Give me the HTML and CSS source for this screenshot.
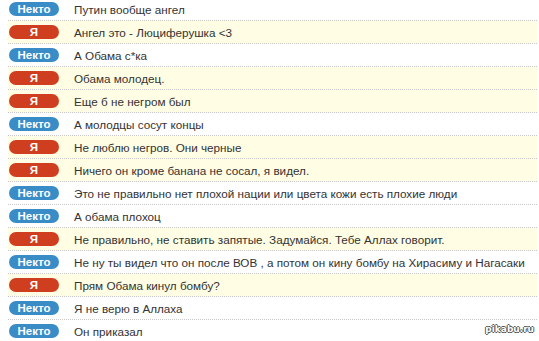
FILE: index.html
```html
<!doctype html>
<html>
<head>
  <meta charset="utf-8"/>
  <title>Чат</title>
  <link rel="stylesheet" href="styles.css">
</head>
<body>
  <div class="log">
    <div class="row"><span class="who them">Некто</span><span class="msg">Путин вообще ангел</span></div>
    <div class="row mine"><span class="who me">Я</span><span class="msg">Ангел это - Люциферушка &lt;3</span></div>
    <div class="row"><span class="who them">Некто</span><span class="msg">А Обама с*ка</span></div>
    <div class="row mine"><span class="who me">Я</span><span class="msg">Обама молодец.</span></div>
    <div class="row mine"><span class="who me">Я</span><span class="msg">Еще б не негром был</span></div>
    <div class="row"><span class="who them">Некто</span><span class="msg">А молодцы сосут концы</span></div>
    <div class="row mine"><span class="who me">Я</span><span class="msg">Не люблю негров. Они черные</span></div>
    <div class="row mine"><span class="who me">Я</span><span class="msg">Ничего он кроме банана не сосал, я видел.</span></div>
    <div class="row"><span class="who them">Некто</span><span class="msg">Это не правильно нет плохой нации или цвета кожи есть плохие люди</span></div>
    <div class="row"><span class="who them">Некто</span><span class="msg">А обама плохоц</span></div>
    <div class="row mine"><span class="who me">Я</span><span class="msg">Не правильно, не ставить запятые. Задумайся. Тебе Аллах говорит.</span></div>
    <div class="row"><span class="who them">Некто</span><span class="msg">Не ну ты видел что он после ВОВ , а потом он кину бомбу на Хирасиму и Нагасаки</span></div>
    <div class="row mine"><span class="who me">Я</span><span class="msg">Прям Обама кинул бомбу?</span></div>
    <div class="row"><span class="who them">Некто</span><span class="msg">Я не верю в Аллаха</span></div>
    <div class="row"><span class="who them">Некто</span><span class="msg">Он приказал</span></div>
  </div>
  <div class="mark">pikabu.ru</div>
</body>
</html>
```

FILE: styles.css
```css
html, body {
  margin: 0;
  height: 100%;
  overflow: hidden;
  background: #fff;
  font-family: "Liberation Sans", Arial, sans-serif;
}
.log {
  margin: -2px 0 0 8px;
  width: 529px;
}
.row {
  display: flex;
  align-items: center;
  height: 22px;
  border-bottom: 1px dotted #c8c8c8;
}
.row.mine {
  background: #fffde3;
}
.who {
  flex: none;
  width: 50px;
  height: 14px;
  margin-left: 1px;
  border-radius: 7px;
  color: #fff;
  font-weight: bold;
  font-size: 11.5px;
  line-height: 14px;
  text-align: center;
}
.them {
  background: #3a8cc6;
}
.me {
  background: #cf3f1f;
}
.msg {
  margin-left: 15px;
  font-size: 11.7px;
  color: #333;
  white-space: nowrap;
}
.mark {
  position: absolute;
  right: 5px;
  bottom: 7px;
  font: bold 9px "DejaVu Sans", sans-serif;
  color: #fff;
  text-shadow: 1px 0 #555, -1px 0 #555, 0 1px #555, 0 -1px #555;
}
```
